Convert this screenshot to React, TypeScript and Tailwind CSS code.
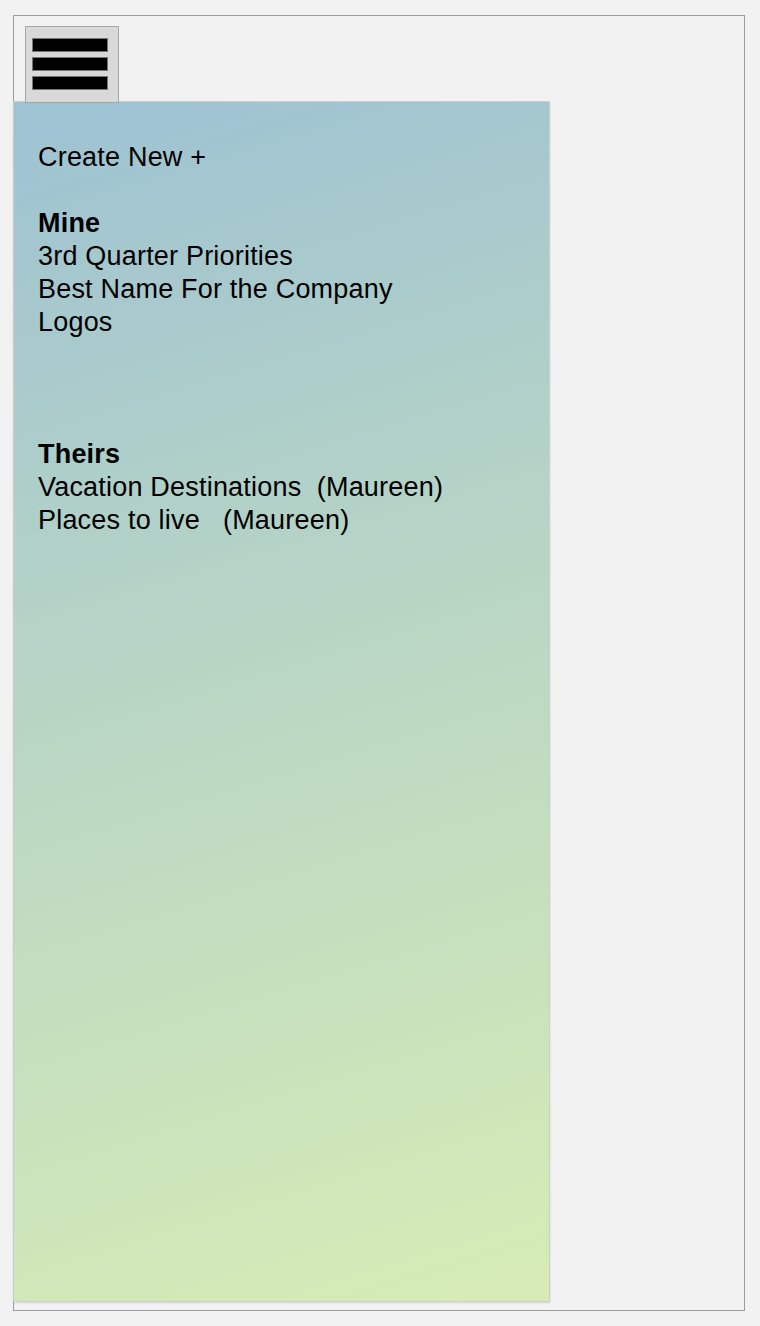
export default function App() {
    const mine = ["3rd Quarter Priorities", "Best Name For the Company", "Logos"];
    const theirs = ["Vacation Destinations  (Maureen)", "Places to live   (Maureen)"];

    return (
        <div className="min-h-[1326px] bg-[#f2f2f2] pt-[15px] pl-[13px] font-['Liberation_Sans',Arial,sans-serif] text-black">
            <div className="w-[732px] h-[1296px] border border-[#9c9c9c]">
                {/* menu toggle */}
                <button className="relative z-10 ml-[11px] mt-[10px] flex h-[77px] w-[94px] flex-col gap-[5px] border border-[#a6a6a6] bg-[#d9d9d9] pl-[6px] pt-[11px]">
                    <span className="block h-[14px] w-[76px] border border-[#777] bg-black" />
                    <span className="block h-[14px] w-[76px] border border-[#777] bg-black" />
                    <span className="block h-[14px] w-[76px] border border-[#777] bg-black" />
                </button>

                {/* side panel */}
                <div className="-ml-px -mt-[2px] h-[1201px] w-[537px] border border-[#c8d0cc] bg-[linear-gradient(163deg,#9dc2d3_0%,#b5d3c6_40%,#d7ecb5_100%)] px-6 pt-[39px] text-[27px] leading-[33px] tracking-[0.2px] shadow-[0_1px_2px_rgba(0,0,0,0.12)]">
                    <div>Create New +</div>
                    <div className="h-[33px]" />
                    <div className="font-bold">Mine</div>
                    {mine.map((t) => (
                        <div key={t}>{t}</div>
                    ))}
                    <div className="h-[99px]" />
                    <div className="font-bold">Theirs</div>
                    {theirs.map((t) => (
                        <div key={t} className="whitespace-pre">
                            {t}
                        </div>
                    ))}
                </div>
            </div>
        </div>
    );
}
